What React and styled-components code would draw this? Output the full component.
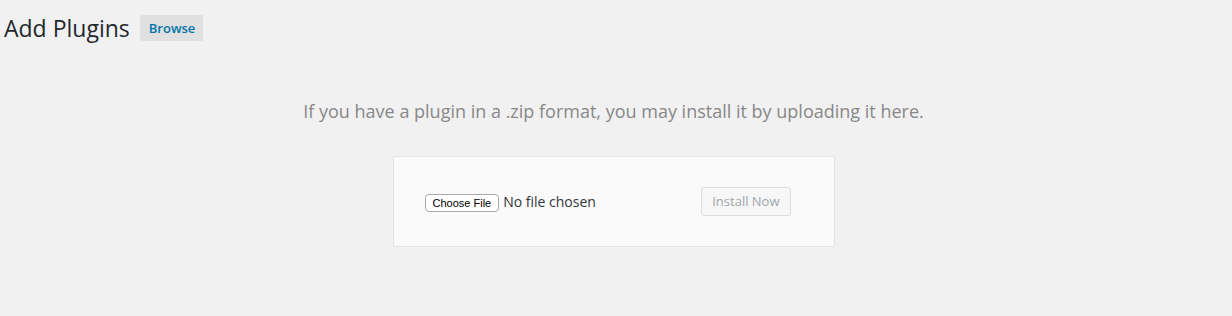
import styled, { createGlobalStyle } from "styled-components";

const GlobalStyle = createGlobalStyle`
  html, body {
    margin: 0;
    padding: 0;
    background: #f1f1f1;
  }
  body {
    font-family: "Open Sans", "Liberation Sans", sans-serif;
    color: #23282d;
  }
`;

const Wrap = styled.div`
  padding: 0 5px 0 0;
  min-height: 316px;
  box-sizing: border-box;
`;

const TitleRow = styled.div`
  display: flex;
  align-items: center;
  padding: 11px 0 0 4px;
`;

const Title = styled.h1`
  margin: 0;
  font-size: 23px;
  font-weight: 400;
  line-height: 34px;
  color: #23282d;
`;

const TitleAction = styled.a`
  margin-left: 10px;
  padding: 4px 8px 4px 9px;
  border-radius: 2px;
  background: #e0e0e0;
  color: #0073aa;
  font-size: 13px;
  font-weight: 600;
  line-height: 18px;
  text-decoration: none;
  position: relative;
  top: 0;
`;

const Help = styled.p`
  margin: 0;
  padding: 53px 0 0;
  text-align: center;
  font-size: 18px;
  line-height: 27px;
  color: #888;
`;

const UploadForm = styled.form`
  display: flex;
  align-items: center;
  justify-content: space-between;
  box-sizing: border-box;
  width: 442px;
  margin: 31px auto 0;
  padding: 30px 43px 30px 31px;
  background: #fafafa;
  border: 1px solid #e5e5e5;
`;

const FileField = styled.div`
  display: flex;
  align-items: center;
  gap: 4px;
  margin-top: -1px;
`;

const FileButton = styled.span`
  display: inline-flex;
  align-items: center;
  height: 18px;
  padding: 0 7px;
  background: #fff;
  border: 1px solid #a9a9a9;
  border-radius: 4px;
  font-family: "Liberation Sans", Arial, sans-serif;
  font-size: 11px;
  color: #000;
  box-sizing: border-box;
  margin-top: 3px;
`;

const FileName = styled.span`
  font-size: 14px;
  color: #32373c;
`;

const Button = styled.button`
  height: 29px;
  padding: 0 10px 1px;
  font-family: "Open Sans", "Liberation Sans", sans-serif;
  font-size: 13px;
  line-height: 26px;
  border-radius: 3px;
  border: 1px solid #ddd;
  background: #f7f7f7;
  color: #a0a5aa;
  cursor: default;
`;

export default function App() {
  return (
    <Wrap>
      <GlobalStyle />
      <TitleRow>
        <Title>Add Plugins</Title>
        <TitleAction href="#">Browse</TitleAction>
      </TitleRow>
      <Help>If you have a plugin in a .zip format, you may install it by uploading it here.</Help>
      <UploadForm onSubmit={(e) => e.preventDefault()}>
        <FileField>
          <FileButton>Choose File</FileButton>
          <FileName>No file chosen</FileName>
        </FileField>
        <Button disabled>Install Now</Button>
      </UploadForm>
    </Wrap>
  );
}
